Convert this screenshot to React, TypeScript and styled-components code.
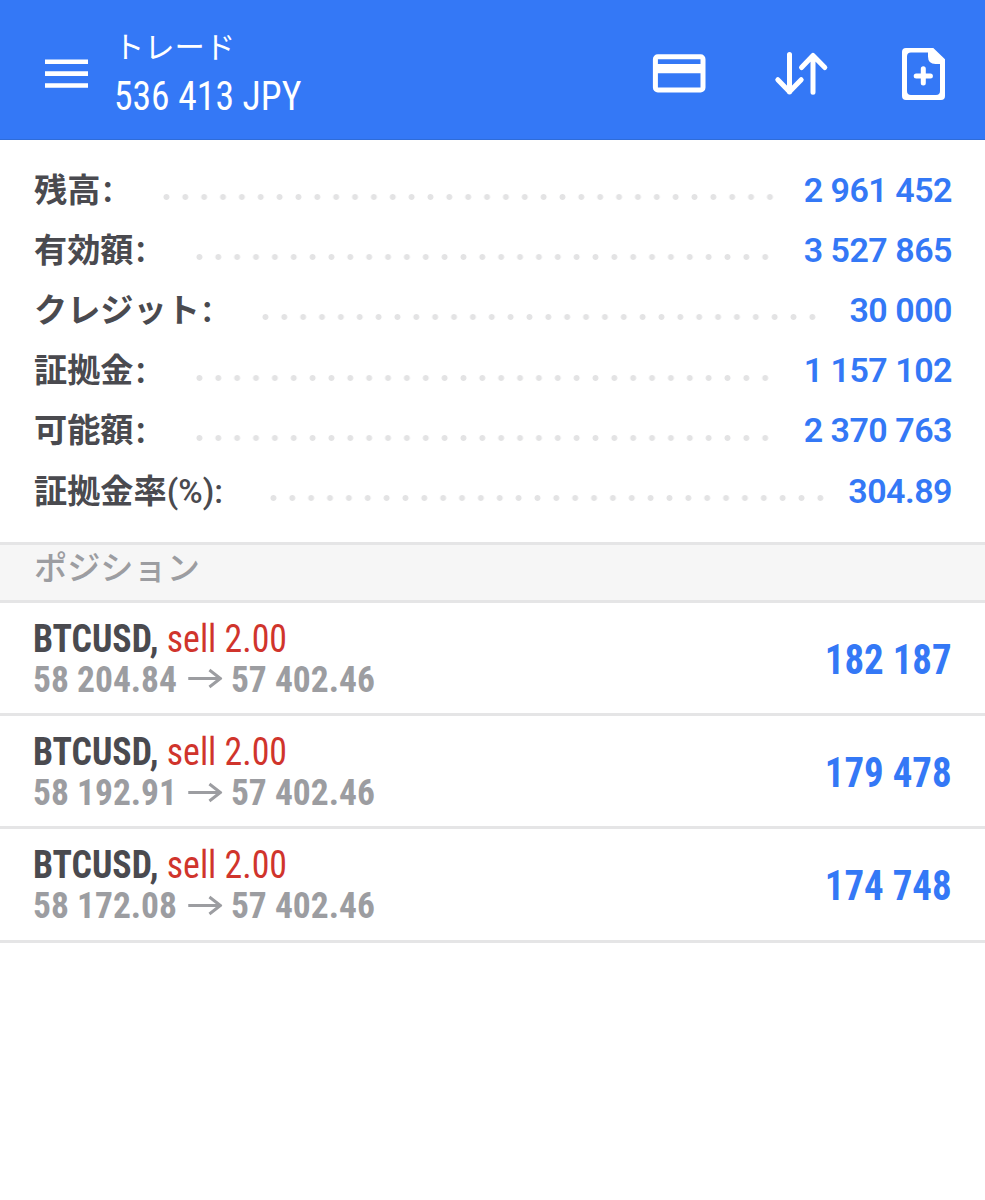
import React from 'react';
import styled, { createGlobalStyle } from 'styled-components';

const BLUE = '#3478f6';
const DOT_PITCH = 18.86;

const GlobalStyle = createGlobalStyle`
  * { box-sizing: border-box; }
  html, body { margin: 0; background: #fff; }
  body {
    font-family: Roboto, 'Noto Sans CJK JP', sans-serif;
    -webkit-font-smoothing: antialiased;
  }
`;

const Screen = styled.div`
  width: 985px;
  height: 1200px;
  overflow: hidden;
  background: #fff;
`;

const TopBar = styled.header`
  display: flex;
  align-items: flex-start;
  height: 139.5px;
  background: ${BLUE};
  border-bottom: 1.5px solid #2f6cd8;
  color: #fff;
`;

const MenuIcon = styled.svg`
  flex: none;
  margin: 59px 0 0 45px;
`;

const Heading = styled.div`
  flex: 1;
  margin-left: 26px;
  padding-top: 25px;
`;

const ScreenName = styled.div`
  font: 400 30.3px/40px 'Noto Sans CJK JP', sans-serif;
`;

const Condensed = styled.span<{ $size: number; $weight?: number; $color?: string }>`
  display: inline-block;
  font-family: 'Roboto Condensed', Roboto, sans-serif;
  font-stretch: 75%;
  font-size: ${p => p.$size}px;
  font-weight: ${p => p.$weight ?? 400};
  color: ${p => p.$color ?? 'inherit'};
  white-space: pre;
`;

/* Narrows the condensed face further, anchored to the edge the text is aligned to. */
const Narrow = styled.div<{ $scale: number; $anchor?: 'left' | 'right' }>`
  display: flex;
  align-items: center;
  transform: scaleX(${p => p.$scale});
  transform-origin: ${p => p.$anchor ?? 'left'} center;
`;

const Total = styled(Narrow)`
  line-height: 62px;
`;

const Actions = styled.div`
  display: flex;
  gap: 66.5px;
  padding: 46px 33px 0 0;
`;

const Summary = styled.dl`
  margin: 0;
  padding: 21px 33px 0 34px;
  height: 402.5px;
`;

const SummaryRow = styled.div`
  display: flex;
  align-items: center;
  height: 60.2px;
`;

const Label = styled.dt<{ $width: number }>`
  flex: 0 0 ${p => p.$width}px;
  height: 60px;
  font: 700 33.2px/59px Roboto, 'Noto Sans CJK JP', sans-serif;
  color: #4a4a4f;
  white-space: nowrap;
`;

const WideColon = styled.span`
  display: inline-block;
  font: 700 29px/1 'Noto Sans CJK SC', sans-serif;
  vertical-align: -0.5px;
`;

const Suffix = styled.span`
  font-weight: 500;
`;

const Leader = styled.div<{ $count: number }>`
  width: ${p => p.$count * DOT_PITCH}px;
  height: 8px;
  margin-top: 13px;
  background: radial-gradient(circle at 50% 50%, #e3e3e4 2.5px, transparent 3.4px) 0 0 / ${DOT_PITCH}px 8px repeat-x;
`;

const Amount = styled.dd`
  margin: 0 0 0 auto;
  height: 60px;
  font: 600 34px/58px Roboto, sans-serif;
  letter-spacing: -0.5px;
  color: ${BLUE};
  white-space: nowrap;
`;

const SectionTitle = styled.h2`
  margin: 0;
  height: 61px;
  padding-left: 34px;
  border: solid #e5e5e6;
  border-width: 3px 0;
  background: #f6f6f6;
  font: 500 33.2px/42px 'Noto Sans CJK JP', sans-serif;
  color: #9c9da1;
`;

const PositionRow = styled.div`
  display: flex;
  align-items: center;
  justify-content: space-between;
  height: 113.2px;
  padding: 2px 33px 0;
  border-bottom: 3px solid #e5e5e6;
`;

const Line = styled(Narrow)`
  line-height: 40.5px;
  color: #9c9da1;
`;

const Arrow = styled.svg`
  margin: 0 9px 0 12px;
`;

const summary = [
  { label: '残高', amount: '2 961 452', width: 122.5, dots: 33 },
  { label: '有効額', amount: '3 527 865', width: 155.7, dots: 31 },
  { label: 'クレジット', amount: '30 000', width: 222.2, dots: 30 },
  { label: '証拠金', amount: '1 157 102', width: 155.7, dots: 31 },
  { label: '可能額', amount: '2 370 763', width: 155.7, dots: 31 },
  { label: '証拠金率', suffix: '(%):', amount: '304.89', width: 229.5, dots: 30 },
];

const positions = [
  { open: '58 204.84', profit: '182 187' },
  { open: '58 192.91', profit: '179 478' },
  { open: '58 172.08', profit: '174 748' },
];

export default function App() {
  return (
    <Screen>
      <GlobalStyle />
      <TopBar>
        <MenuIcon width="43" height="30" viewBox="0 0 43 30" fill="#fff">
          <path d="M0 .4h43v4.6H0zM0 12.3h43v4.6H0zM0 24.2h43v4.6H0z" />
        </MenuIcon>
        <Heading>
          <ScreenName>トレード</ScreenName>
          <Total $scale={0.917}><Condensed $size={41}>536 413 JPY</Condensed></Total>
        </Heading>
        <Actions>
          <svg width="56" height="56" viewBox="651 46 56 56">
            <rect x="655.4" y="56.8" width="47.6" height="33.2" rx="2.4" fill="none" stroke="#fff" strokeWidth="5" />
            <path d="M655 64h48v9.3h-48z" fill="#fff" />
          </svg>
          <svg width="56" height="56" viewBox="774 46 56 56" fill="none" stroke="#fff" strokeWidth="5" strokeLinecap="round" strokeLinejoin="round">
            <path d="M789.5 54.5v37.5M777.8 79.7l11.7 12 11.7-12M813 92.3V55.5M801.5 67.5l11.5-12 11.8 12" />
          </svg>
          <svg width="56" height="56" viewBox="896 46 56 56">
            <path fillRule="evenodd" fill="#fff" d="M906 48h27.3L945 59.2V96a4 4 0 0 1-4 4h-35a4 4 0 0 1-4-4V52a4 4 0 0 1 4-4zM911 52.4q-4 0-4 4V91q0 4 4 4h25q4 0 4-4V64h-4.500q-7.500 0-7.500-7.500v-4.100z" />
            <path d="M923.3 68.800v14.200M916.200 75.900h14.200" stroke="#fff" strokeWidth="5" strokeLinecap="round" />
          </svg>
        </Actions>
      </TopBar>
      <Summary>
        {summary.map(row => (
          <SummaryRow key={row.label}>
            <Label $width={row.width}>
              {row.label}
              {row.suffix ? <Suffix>{row.suffix}</Suffix> : <WideColon lang="zh-CN">：</WideColon>}
            </Label>
            <Leader $count={row.dots} />
            <Amount>{row.amount}</Amount>
          </SummaryRow>
        ))}
      </Summary>
      <SectionTitle>ポジション</SectionTitle>
      {positions.map(p => (
        <PositionRow key={p.open}>
          <div>
            <Line $scale={0.942}>
              <Condensed $size={38} $weight={700} $color="#4a4a4f">{'BTCUSD, '}</Condensed>
              <Condensed $size={38} $color="#d0342c">sell 2.00</Condensed>
            </Line>
            <Line $scale={0.946}>
              <Condensed $size={37.5} $weight={700}>{p.open}</Condensed>
              <Arrow width="36" height="22" viewBox="0 0 36 22" fill="none" stroke="#9c9da1" strokeWidth="3.2">
                <path d="M0 10.500h33.500M22.500 2l11.500 8.500L22.500 19" />
              </Arrow>
              <Condensed $size={37.5} $weight={700}>57 402.46</Condensed>
            </Line>
          </div>
          <Narrow $scale={0.915} $anchor="right">
            <Condensed $size={42.5} $weight={700} $color={BLUE}>{p.profit}</Condensed>
          </Narrow>
        </PositionRow>
      ))}
    </Screen>
  );
}
